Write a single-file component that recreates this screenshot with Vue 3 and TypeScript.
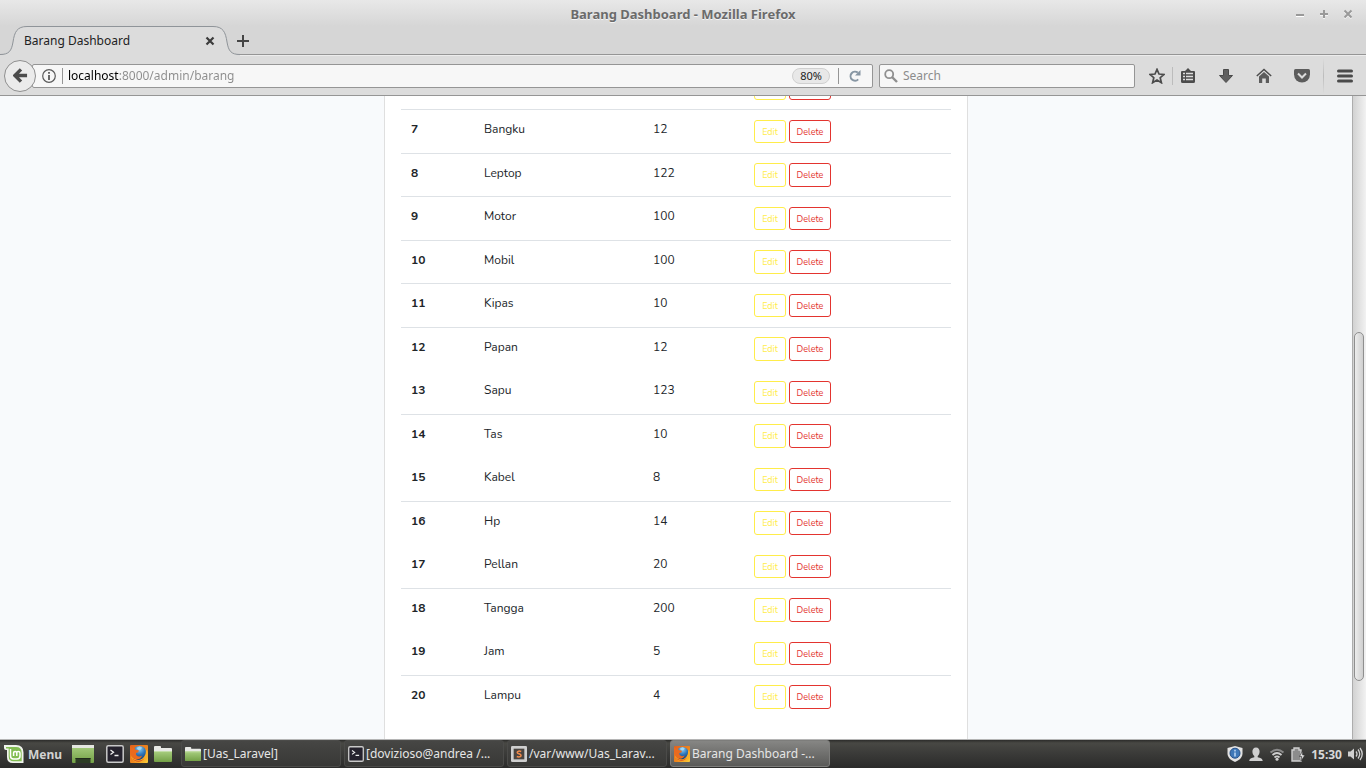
<script setup lang="ts">
import { ref } from 'vue'

interface Item {
  no: number
  name: string
  amount: number
}

const items: Item[] = [
  { no: 7, name: 'Bangku', amount: 12 },
  { no: 8, name: 'Leptop', amount: 122 },
  { no: 9, name: 'Motor', amount: 100 },
  { no: 10, name: 'Mobil', amount: 100 },
  { no: 11, name: 'Kipas', amount: 10 },
  { no: 12, name: 'Papan', amount: 12 },
  { no: 13, name: 'Sapu', amount: 123 },
  { no: 14, name: 'Tas', amount: 10 },
  { no: 15, name: 'Kabel', amount: 8 },
  { no: 16, name: 'Hp', amount: 14 },
  { no: 17, name: 'Pellan', amount: 20 },
  { no: 18, name: 'Tangga', amount: 200 },
  { no: 19, name: 'Jam', amount: 5 },
  { no: 20, name: 'Lampu', amount: 4 },
]

const plainRows = [13, 15, 17, 19]

const tasks = [
  { icon: 'folder', label: '[Uas_Laravel]', active: false },
  { icon: 'terminal', label: '[dovizioso@andrea /...', active: false },
  { icon: 'sublime', label: '/var/www/Uas_Larav...', active: false },
  { icon: 'firefox', label: 'Barang Dashboard -...', active: true },
]

const address = ref('localhost:8000/admin/barang')
const query = ref('')
</script>

<template>
  <div class="desktop">
    <svg class="defs" aria-hidden="true">
      <defs>
        <linearGradient id="leaf" x1="0" y1="0" x2="0" y2="1">
          <stop offset="0" stop-color="#a9cf80" />
          <stop offset="1" stop-color="#73a046" />
        </linearGradient>
        <radialGradient id="globe" cx=".5" cy=".2" r=".85">
          <stop offset="0" stop-color="#8fd0f2" />
          <stop offset=".45" stop-color="#2f78bd" />
          <stop offset="1" stop-color="#12305f" />
        </radialGradient>
        <linearGradient id="flame" x1="0" y1="0" x2="1" y2="1">
          <stop offset="0" stop-color="#e2601c" />
          <stop offset=".6" stop-color="#f08a1d" />
          <stop offset="1" stop-color="#fbd13a" />
        </linearGradient>
        <symbol id="folder" viewBox="0 0 18 18">
          <path d="M0 2q0-1 1-1h5q1 0 1 1v1h10q1 0 1 1v3H0z" fill="#e8e9e5" />
          <path d="M0 6h18v10q0 1-1 1H1q-1 0-1-1z" fill="url(#leaf)" />
          <path d="M0 6.500h18" stroke="#c3dda8" />
        </symbol>
        <symbol id="terminal" viewBox="0 0 18 18">
          <rect x=".8" y=".8" width="16.400" height="16.400" rx="1.500" fill="#25222d" stroke="#c9c9c9" stroke-width="1.500" />
          <path d="M4.500 5l3 2.200-3 2.200M8.500 10.500h4" fill="none" stroke="#eee" stroke-width="1.300" />
        </symbol>
        <symbol id="sublime" viewBox="0 0 18 18">
          <rect x="0" y="0" width="18" height="18" rx="1.500" fill="#cfcfcf" />
          <rect x="3" y="3" width="12" height="12" fill="#4a4541" />
          <path d="M11.500 6.200C9.500 5.400 7 5.600 7 7.200s4.300 1.600 4.300 3.400-2.800 2-4.800 1.200" fill="none" stroke="#f08a4b" stroke-width="1.700" />
        </symbol>
        <symbol id="firefox" viewBox="0 0 18 18">
          <rect width="18" height="18" rx="1" fill="url(#flame)" />
          <circle cx="9.500" cy="8.200" r="7.200" fill="url(#globe)" />
          <path d="M6.500 3l3-1.600 2.500 1-1 2.100-2.500.5z" fill="#a9dcf5" opacity=".85" />
          <path d="M0 1l2.500 2L4.500 1.500 5 4.500l4 .9-.8 1.800-2.200.8c-.6 2.600 2.500 4.600 6 2.800-1 3.400-4.800 4.600-8 2.700C1.500 12 0 8 0 5z" fill="#ea6a1e" />
          <path d="M1 11c3 5.500 11.500 5.800 14.300-1.500.8-2.200.6-4 .1-5.500L17.500 6.500c1 5-1.500 9.500-6.500 10.700C6 18 2 15.500 1 11z" fill="#f9b02a" />
          <path d="M2 13c3.500 4 10 3.500 12.800-.5-2 5-9.800 6-12.800.5z" fill="#d9481c" />
        </symbol>
      </defs>
    </svg>

    <header class="chrome">
      <div class="titlebar">
        <h1>Barang Dashboard - Mozilla Firefox</h1>
        <div class="window-buttons">
          <button type="button" aria-label="Minimize">
            <svg viewBox="0 0 10 10"><path d="M1 7.500h8" stroke="#fff" /><path d="M1 6h8" stroke="#999" stroke-width="2" /></svg>
          </button>
          <button type="button" aria-label="Maximize">
            <svg viewBox="0 0 10 10"><path d="M1 6h8M5 2v8" stroke="#f4f4f4" stroke-width="2" /><path d="M1 5h8M5 1v8" stroke="#999" stroke-width="2" /></svg>
          </button>
          <button type="button" aria-label="Close">
            <svg viewBox="0 0 10 10"><path d="M1.500 2.500l7 7M8.500 2.500l-7 7" stroke="#f4f4f4" stroke-width="2" /><path d="M1.500 1.500l7 7M8.500 1.500l-7 7" stroke="#999" stroke-width="2" /></svg>
          </button>
        </div>
      </div>

      <div class="tabstrip">
        <div class="tab">
          <svg class="tab-shape" viewBox="0 0 240 30" aria-hidden="true">
            <path d="M0 28.500C9 28.500 11.500 25 13 16 14.500 6 17 .5 27 .5H213C223 .5 225.500 6 227 16 228.500 25 231 28.500 240 28.500V30H0z" fill="#dcdcdc" />
            <path d="M0 28.500C9 28.500 11.500 25 13 16 14.500 6 17 .5 27 .5H213C223 .5 225.500 6 227 16 228.500 25 231 28.500 240 28.500" fill="none" stroke="#8f9499" />
          </svg>
          <span class="tab-label">Barang Dashboard</span>
          <button type="button" class="tab-close" aria-label="Close tab">
            <svg viewBox="0 0 10 10"><path d="M1.500 1.500l7 7M8.500 1.500l-7 7" stroke="#3c3c3c" stroke-width="2.200" /></svg>
          </button>
        </div>
        <button type="button" class="new-tab" aria-label="New tab">
          <svg viewBox="0 0 12 12"><path d="M0 6h12M6 0v12" stroke="#454545" stroke-width="2" /></svg>
        </button>
      </div>

      <nav class="toolbar">
        <button type="button" class="back" aria-label="Back">
          <svg viewBox="0 0 16 16"><path d="M8.500 1.500L2 8l6.500 6.500M3 8h12" fill="none" stroke="#4c4c4c" stroke-width="3.600" /></svg>
        </button>
        <div class="urlbar">
          <svg class="info" viewBox="0 0 14 14">
            <circle cx="7" cy="7" r="6.300" fill="none" stroke="#5a5a5a" stroke-width="1.200" />
            <path d="M7 3v1.800M7 6v5" stroke="#5a5a5a" stroke-width="1.800" />
          </svg>
          <i class="divider"></i>
          <input v-model="address" class="address" type="text" aria-label="Address" />
          <button type="button" class="zoom-level">80%</button>
          <i class="divider"></i>
          <button type="button" class="reload" aria-label="Reload">
            <svg viewBox="0 0 12 12"><path d="M9.200 9.400A4.500 4.500 0 1 1 8.800 2.600" fill="none" stroke="#8796a3" stroke-width="2" /><path d="M11.500 0v5.500H6z" fill="#8796a3" /></svg>
          </button>
        </div>
        <div class="searchbar">
          <svg viewBox="0 0 14 14"><circle cx="5.200" cy="5.200" r="4" fill="none" stroke="#8f8f8f" stroke-width="1.800" /><path d="M8 8l5 5" stroke="#8f8f8f" stroke-width="2.400" /></svg>
          <input v-model="query" type="text" placeholder="Search" aria-label="Search" />
        </div>
        <div class="tools">
          <button type="button" aria-label="Bookmark this page">
            <svg viewBox="0 0 16 16"><path d="M8 1.400l2 4.600 5 .4-3.800 3.300 1.200 5L8 12l-4.400 2.700 1.200-5L1 6.400 6 6z" fill="none" stroke="#4c4c4c" stroke-width="1.700" /></svg>
          </button>
          <i class="short-line"></i>
          <button type="button" class="list" aria-label="Bookmarks list">
            <svg viewBox="0 0 16 16"><path d="M2 3h3l3-3 3 3h3q1 0 1 1v9.500q0 1.500-1.500 1.500h-11Q1 15 1 13.500V4q0-1 1-1z" fill="#4c4c4c" /><path d="M3 5.500h2m1 0h7M3 8.500h2m1 0h7M3 11.500h2m1 0h7" stroke="#dcdcdc" stroke-width="1.700" /></svg>
          </button>
          <button type="button" aria-label="Downloads">
            <svg viewBox="0 0 16 16"><path d="M5.500 1.500h5v6H14.500L8 14.500l-6.500-7h4z" fill="#606060" stroke="#4a4a4a" /></svg>
          </button>
          <button type="button" aria-label="Home">
            <svg viewBox="0 0 16 16"><path d="M.8 8L8 1.500 15.200 8" fill="none" stroke="#4c4c4c" stroke-width="1.500" /><path d="M3 8.500l5-4.500 5 4.500V15H9.800v-4.500H6.200V15H3z" fill="#5c5c5c" /></svg>
          </button>
          <button type="button" aria-label="Pocket">
            <svg viewBox="0 0 16 16"><path d="M1.500 1h13Q16 1 16 2.500v4a8 8 0 0 1-16 0v-4Q0 1 1.500 1z" fill="#5c5c5c" /><path d="M4 5.500l4 4 4-4" fill="none" stroke="#dcdcdc" stroke-width="2" /></svg>
          </button>
          <i class="tall-line"></i>
          <button type="button" class="menu" aria-label="Menu">
            <svg viewBox="0 0 16 16"><path d="M1.500 3h13M1.500 8h13M1.500 13h13" stroke="#4a4a4a" stroke-width="3" stroke-linecap="round" /></svg>
          </button>
        </div>
      </nav>
    </header>

    <div class="viewport">
      <main class="page">
        <section class="card">
          <table>
            <colgroup>
              <col class="c-no" />
              <col class="c-name" />
              <col class="c-amount" />
              <col />
            </colgroup>
            <tbody>
              <tr>
                <th scope="row"></th>
                <td></td>
                <td></td>
                <td class="actions">
                  <div><a href="#" class="btn edit" aria-label="Edit"></a><button type="button" class="btn delete" aria-label="Delete"></button></div>
                </td>
              </tr>
              <tr v-for="item in items" :key="item.no" :class="{ plain: plainRows.includes(item.no) }">
                <th scope="row">{{ item.no }}</th>
                <td>{{ item.name }}</td>
                <td>{{ item.amount }}</td>
                <td class="actions">
                  <div><a href="#" class="btn edit">Edit</a><button type="button" class="btn delete">Delete</button></div>
                </td>
              </tr>
            </tbody>
          </table>
        </section>
      </main>
      <div class="scrollbar" aria-hidden="true">
        <div class="before"></div>
        <div class="thumb"></div>
        <div class="after"></div>
      </div>
    </div>

    <footer class="taskbar">
      <button type="button" class="start">
        <svg viewBox="0 0 20 20">
          <path d="M0 1h12q7.500 0 7.500 7.500V19H9Q3 19 3 13V6H2Q0 6 0 4z" fill="#f0f3ec" />
          <path d="M2 3h10q5.700 0 5.700 5.700V17.200H9.500Q4.700 17.200 4.700 12.500V4.500H2z" fill="#83bd53" />
          <path d="M6.500 5v7q0 3 3 3h3.500q3 0 3-3V9q0-1.600-1.600-1.600T12.800 9v3M12.800 9q0-1.600-1.600-1.600T9.600 9v3" fill="none" stroke="#fff" stroke-width="1.500" />
        </svg>
        <span>Menu</span>
      </button>
      <div class="launchers">
        <button type="button" class="show-desktop" aria-label="Show desktop">
          <svg viewBox="0 0 22 18"><rect width="22" height="18" rx="1" fill="url(#leaf)" /><path d="M0 0h22v3H0z" fill="#e4e6e0" /><path d="M3.500 18v-5h15v5z" fill="#2d3c25" /><path d="M3.500 13.500h15" stroke="#1f2a1a" /></svg>
        </button>
        <button type="button" aria-label="Terminal"><svg><use href="#terminal" /></svg></button>
        <button type="button" aria-label="Firefox"><svg><use href="#firefox" /></svg></button>
        <button type="button" aria-label="Files"><svg><use href="#folder" /></svg></button>
      </div>
      <div class="tasks">
        <button v-for="task in tasks" :key="task.label" type="button" :class="{ active: task.active }">
          <svg><use :href="'#' + task.icon" /></svg>
          <span>{{ task.label }}</span>
        </button>
      </div>
      <div class="tray">
        <svg viewBox="0 0 16 16"><path d="M8 0l7.500 2v5.500c0 4-3.500 7-7.500 8.500C4 14.500.5 11.500.5 7.500V2z" fill="#e2e2e2" /><circle cx="8" cy="7.200" r="5" fill="#3f78b8" stroke="#24508a" /><path d="M8 3.800v1.600M8 6.500v4" stroke="#a9c8ea" stroke-width="1.800" /></svg>
        <svg viewBox="0 0 16 16"><path d="M8 1.500c2.400 0 3.600 1.700 3.600 4 0 2-.9 3.700-1.900 4.500v1.200c2.500.6 5 1.200 5 3.800H1.300c0-2.600 2.500-3.200 5-3.800V10c-1-.8-1.900-2.500-1.900-4.500 0-2.300 1.200-4 3.600-4z" fill="#cfcfcf" /></svg>
        <svg viewBox="0 0 16 16"><g fill="none" stroke-width="1.800"><path d="M1.500 6.500q6.500-5.500 13 0" stroke="#8b8b8b" /><path d="M3.500 9q4.500-4 9 0" stroke="#cfcfcf" /><path d="M5.500 11.500q2.500-2.300 5 0" stroke="#cfcfcf" /></g><circle cx="8" cy="13.300" r="1.500" fill="#cfcfcf" /></svg>
        <svg viewBox="0 0 16 16"><path d="M4 2h5v2h2v11H2V4h2z" fill="#8c8c8c" stroke="#cfcfcf" stroke-width="1.400" /><path d="M12.500 5L9.500 10.500h2.200L11 15l4-6h-2.300z" fill="#e2e2e2" stroke="#2f2f2f" stroke-width=".6" /></svg>
        <time>15:30</time>
        <svg viewBox="0 0 16 16"><path d="M1 5.500h2.500L7 2.500v11L3.500 10.500H1z" fill="#cfcfcf" /><path d="M9 5.500q2 2.500 0 5M11 3.500q3.500 4.500 0 9M13 2q4.500 6 0 12" fill="none" stroke="#cfcfcf" stroke-width="1.300" /></svg>
      </div>
    </footer>
  </div>
</template>

<style>
html,
body,
#app {
  height: 100%;
}
body {
  margin: 0;
  overflow: hidden;
}
</style>

<style scoped>
.desktop {
  display: flex;
  flex-direction: column;
  height: 100vh;
  overflow: hidden;
  font-family: "Noto Sans", "Open Sans", sans-serif;
  font-size: 12px;
  color: #222;
}
.desktop * {
  box-sizing: border-box;
}
.defs {
  position: absolute;
  width: 0;
  height: 0;
}
button,
input {
  margin: 0;
  padding: 0;
  border: 0;
  background: none;
  font: inherit;
  color: inherit;
}
input {
  outline: 0;
  min-width: 0;
}
svg {
  display: block;
  flex: none;
}

/* Window frame */
.chrome {
  flex: none;
  background: #d6d6d6;
}
.titlebar {
  display: grid;
  grid-template-columns: 1fr auto 1fr;
  align-items: center;
  height: 26px;
  padding: 2px 13px 0;
  background: linear-gradient(#e8e8e8, #d6d6d6);
}
h1 {
  grid-column: 2;
  margin: 0;
  font-size: 13px;
  line-height: 18px;
  font-weight: 700;
  color: #6b6b6b;
  text-shadow: 0 1px 0 #f4f4f4;
}
.window-buttons {
  display: flex;
  justify-content: flex-end;
  gap: 14px;
}
.window-buttons svg {
  width: 10px;
  height: 10px;
}

.tabstrip {
  display: flex;
  height: 29px;
  border-bottom: 1px solid #959595;
}
.tab {
  position: relative;
  display: flex;
  align-items: center;
  width: 240px;
  height: 29px;
  padding: 0 25px 0 24px;
}
.tab-shape {
  position: absolute;
  left: 0;
  top: 0;
  width: 240px;
  height: 30px;
}
.tab-label {
  position: relative;
  flex: 1;
}
.tab-close {
  position: relative;
}
.tab-close svg {
  width: 10px;
  height: 10px;
}
.new-tab {
  width: 12px;
  margin-left: -3px;
  padding-top: 2px;
}
.new-tab svg {
  width: 12px;
  height: 12px;
}

.toolbar {
  display: flex;
  align-items: center;
  height: 41px;
  padding-left: 4px;
  background: #dcdcdc;
  border-top: 1px solid #ececec;
  border-bottom: 1px solid #959595;
}
.back {
  z-index: 1;
  display: grid;
  place-items: center;
  flex: none;
  width: 32px;
  height: 32px;
  border: 1px solid #8f8f8f;
  border-radius: 50%;
  background: #ebebeb;
}
.back svg {
  width: 15px;
  height: 15px;
}
.urlbar,
.searchbar {
  display: flex;
  align-items: center;
  height: 24px;
  border: 1px solid #959595;
  border-radius: 2px;
  background: #f7f7f7;
}
.urlbar {
  flex: 819 1 0;
  margin-left: -4px;
  padding: 0 11px 0 9px;
}
.info {
  width: 14px;
  height: 14px;
  margin-right: 6px;
}
.divider {
  width: 1px;
  height: 16px;
  background: #959595;
}
.address {
  flex: 1;
  height: 22px;
  margin-left: 5px;
  color: transparent;
  caret-color: #222;
  background: linear-gradient(90deg, #000 51px, #8c8c8c 51px);
  -webkit-background-clip: text;
  background-clip: text;
}
.zoom-level {
  width: 38px;
  height: 16px;
  margin-right: 8px;
  border: 1px solid #d0d0d0;
  border-radius: 8px;
  background: #e8e8e8;
  font-size: 11px;
  line-height: 14px;
}
.reload {
  margin-left: 10px;
}
.reload svg {
  width: 12px;
  height: 12px;
}
.searchbar {
  flex: 246 1 0;
  margin-left: 6px;
  padding: 0 4px;
}
.searchbar svg {
  width: 14px;
  height: 14px;
}
.searchbar input {
  flex: 1;
  height: 22px;
  margin-left: 5px;
}
.searchbar input::placeholder {
  color: #8c8c8c;
  opacity: 1;
}
.tools {
  display: flex;
  align-items: center;
  gap: 22px;
  height: 40px;
  padding: 0 13px 0 14px;
}
.tools svg {
  width: 16px;
  height: 16px;
}
.short-line,
.tall-line {
  width: 1px;
  background: #bcbcbc;
}
.short-line {
  height: 18px;
  margin: 0 -15px;
}
.tall-line {
  height: 36px;
  margin: 0 -9px;
  background: linear-gradient(#dcdcdc, #bcbcbc 50%, #dcdcdc);
}

/* Page */
.viewport {
  display: flex;
  flex: 1;
  min-height: 0;
  background: #f8fafc;
}
.page {
  display: flex;
  flex: 1;
  flex-direction: column;
  align-items: center;
  justify-content: flex-end;
  min-width: 0;
  overflow: hidden;
  font-family: Nunito, Lato, "Open Sans", sans-serif;
}
.card {
  width: 584px;
  max-width: 100%;
  padding: 16px 16px 21px;
  border: 1px solid #dfdfdf;
  border-width: 1px 1px 0;
  background: #fff;
  color: #212529;
}
table {
  width: 100%;
  table-layout: fixed;
  border-collapse: separate;
  border-spacing: 0;
}
.c-no {
  width: 73px;
}
.c-name {
  width: 169px;
}
.c-amount {
  width: 101px;
}
tr {
  height: 44px;
}
tr:nth-child(odd) {
  height: 43px;
}
th,
td {
  padding: 9px 10px 0;
  border-top: 1px solid #dee2e6;
  font-size: 12px;
  line-height: 20px;
  text-align: left;
  vertical-align: top;
}
.plain > * {
  border-top-color: transparent;
}
.actions {
  padding: 10px 10px 0;
}
tr:nth-child(odd) .actions {
  padding-top: 9px;
}
.actions div {
  display: flex;
  gap: 3px;
}
.btn {
  height: 23px;
  padding-top: 1px;
  border: 1px solid;
  border-radius: 3px;
  font-family: inherit;
  font-size: 9px;
  line-height: 21px;
  text-align: center;
  text-decoration: none;
}
tr:nth-child(odd) .btn {
  height: 24px;
}
.edit {
  width: 32px;
  color: #ffed4a;
}
.delete {
  width: 42px;
  color: #e3342f;
}

.scrollbar {
  display: flex;
  flex-direction: column;
  width: 14px;
  padding: 0 2px 0 1px;
  border-left: 1px solid #adadad;
  background: linear-gradient(90deg, #d2d2d2, #f2f2f2);
}
.before {
  flex: 237;
}
.thumb {
  flex: 348;
  border: 1px solid #8f8f8f;
  border-radius: 5px;
  background: linear-gradient(90deg, #ececec, #cfcfcf);
}
.after {
  flex: 58;
}

/* Panel */
.taskbar {
  display: flex;
  align-items: center;
  flex: none;
  height: 29px;
  padding: 0 3px 0 4px;
  border-top: 1px solid #b5b5b5;
  background: linear-gradient(#2c2c2a, #484844 3px, #3a3a38 50%, #2b2b2a);
  color: #e6e6e6;
}
.start {
  display: flex;
  align-items: center;
  gap: 4px;
  width: 68px;
  color: #d2d2d2;
  font-weight: 700;
}
.start svg {
  width: 20px;
  height: 20px;
}
.launchers {
  display: flex;
  align-items: center;
  gap: 6px;
}
.launchers svg {
  width: 18px;
  height: 18px;
}
.launchers .show-desktop {
  margin-right: 6px;
}
.launchers .show-desktop svg {
  width: 22px;
}
.tasks {
  display: flex;
  flex: 1;
  gap: 3px;
  height: 28px;
  margin-left: 9px;
  min-width: 0;
}
.tasks button {
  display: flex;
  align-items: center;
  gap: 2px;
  flex: 0 1 160px;
  min-width: 0;
  height: 27px;
  padding: 0 3px;
  border: 1px solid #4b4b49;
  border-radius: 3px;
  background: linear-gradient(#464644, #383836);
  white-space: nowrap;
}
.tasks button.active {
  border-color: #7d7d7b;
  background: linear-gradient(#868684, #5a5a58);
}
.tasks svg {
  width: 16px;
  height: 16px;
}
.tray {
  display: flex;
  align-items: center;
  gap: 5px;
  color: #d8d8d8;
  font-weight: 700;
}
.tray svg {
  width: 16px;
  height: 16px;
}
</style>
